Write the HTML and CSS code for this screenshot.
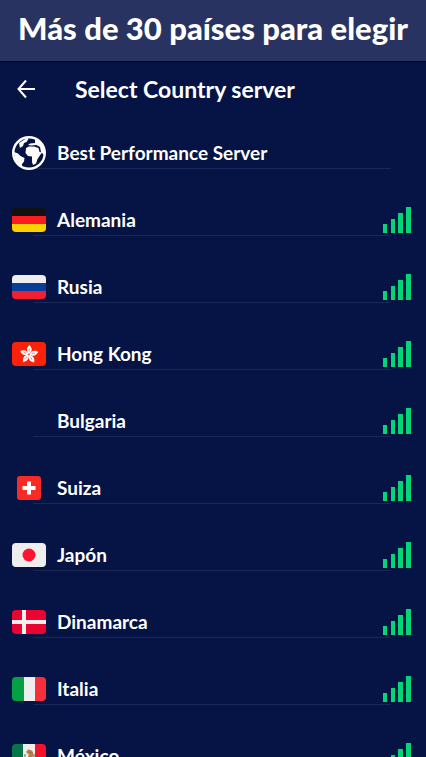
FILE: index.html
```html
<!DOCTYPE html>
<html lang="es">
<head>
<meta charset="utf-8">
<meta name="viewport" content="width=device-width, initial-scale=1">
<title>Select Country server</title>
<link rel="stylesheet" href="styles.css">
</head>
<body>
<header class="banner"><h1>Más de 30 países para elegir</h1></header>
<main class="screen">
  <div class="toolbar">
    <button class="back" type="button" aria-label="Back">
      <svg width="20" height="20" viewBox="0 0 20 20" fill="none" stroke="#fff" stroke-width="2"><path d="M19 10H3M10 1.500L2.500 10l7.500 8.500"/></svg>
    </button>
    <h2>Select Country server</h2>
  </div>
  <ul class="servers" id="servers">
    <li><button class="server" type="button">
      <svg class="globe" viewBox="0 0 34 34"><circle cx="17" cy="17" r="17" fill="#fff"/><circle cx="17" cy="17" r="14.600" fill="#051444"/><path fill="#fff" d="M2 16l4 1.500 2.500 2.500 4 2-.5 3.500-2 2.500v3L3 26zM14 12l3-1.500h5l4.500 1.500 1 4 2.500.5-2.500 3.500-2 3-1.500 4.500-3 1.500-1-3v-5.500l-4-.5-2.500-3zM23 2l6 4 4 9-1 4-3-3-1-5-3.500-2L19 9.500l-3-.5 2-1.500 5-.5zM7 7l8-5 1.500 1-2 3-2.500 1-1 3-3 2z"/></svg>
      <span class="name">Best Performance Server</span></button></li>
    <li><button class="server" type="button">
      <svg class="flag" viewBox="0 0 34 24"><path fill="#111" d="M0 0h34v8H0z"/><path fill="#fa1c20" d="M0 8h34v8H0z"/><path fill="#ffd000" d="M0 16h34v8H0z"/></svg>
      <span class="name">Alemania</span><svg class="signal" viewBox="0 0 28 26"><path d="M0 17h4v9H0zM8 12h4v14H8zM15 6h5v20h-5zM23 0h5v26h-5z"/></svg></button></li>
    <li><button class="server" type="button">
      <svg class="flag" viewBox="0 0 34 24"><path fill="#eee" d="M0 0h34v8H0z"/><path fill="#073e99" d="M0 8h34v8H0z"/><path fill="#f21f30" d="M0 16h34v8H0z"/></svg>
      <span class="name">Rusia</span><svg class="signal" viewBox="0 0 28 26"><path d="M0 17h4v9H0zM8 12h4v14H8zM15 6h5v20h-5zM23 0h5v26h-5z"/></svg></button></li>
    <li><button class="server" type="button">
      <svg class="flag" viewBox="0 0 34 24"><defs><g id="petal"><path fill="#fff" d="M0-.5C-3-2-4-7-.5-9.500 0-8 2.500-7 2-4 1.500-2 .8-1.500 0-.5z"/><path d="M0-3Q-1-4 0-6" fill="none" stroke="#fa2a10" stroke-width=".5"/></g></defs><path fill="#fa2208" d="M0 0h34v24H0z"/><g transform="translate(17 12.500) rotate(8)"><use href="#petal"/><use href="#petal" transform="rotate(72)"/><use href="#petal" transform="rotate(144)"/><use href="#petal" transform="rotate(216)"/><use href="#petal" transform="rotate(288)"/></g></svg>
      <span class="name">Hong Kong</span><svg class="signal" viewBox="0 0 28 26"><path d="M0 17h4v9H0zM8 12h4v14H8zM15 6h5v20h-5zM23 0h5v26h-5z"/></svg></button></li>
    <li><button class="server" type="button">
      <span class="flag"></span>
      <span class="name">Bulgaria</span><svg class="signal" viewBox="0 0 28 26"><path d="M0 17h4v9H0zM8 12h4v14H8zM15 6h5v20h-5zM23 0h5v26h-5z"/></svg></button></li>
    <li><button class="server" type="button">
      <svg class="flag" viewBox="0 0 34 24"><rect x="5" width="24" height="24" rx="3" fill="#f92a25"/><path fill="#fff" d="M15 5.500h4V10h4.500v4H19v4.500h-4V14h-4.500v-4H15z"/></svg>
      <span class="name">Suiza</span><svg class="signal" viewBox="0 0 28 26"><path d="M0 17h4v9H0zM8 12h4v14H8zM15 6h5v20h-5zM23 0h5v26h-5z"/></svg></button></li>
    <li><button class="server" type="button">
      <svg class="flag" viewBox="0 0 34 24"><path fill="#eee" d="M0 0h34v24H0z"/><circle cx="17" cy="12" r="6.500" fill="#ff1230"/></svg>
      <span class="name">Japón</span><svg class="signal" viewBox="0 0 28 26"><path d="M0 17h4v9H0zM8 12h4v14H8zM15 6h5v20h-5zM23 0h5v26h-5z"/></svg></button></li>
    <li><button class="server" type="button">
      <svg class="flag" viewBox="0 0 34 24"><path fill="#e90532" d="M0 0h34v24H0z"/><path fill="#f2eef0" d="M10 0h4v24h-4zM0 10h34v4H0z"/></svg>
      <span class="name">Dinamarca</span><svg class="signal" viewBox="0 0 28 26"><path d="M0 17h4v9H0zM8 12h4v14H8zM15 6h5v20h-5zM23 0h5v26h-5z"/></svg></button></li>
    <li><button class="server" type="button">
      <svg class="flag" viewBox="0 0 34 24"><path fill="#05a044" d="M0 0h12v24H0z"/><path fill="#eee" d="M12 0h11v24H12z"/><path fill="#f72f3b" d="M23 0h11v24H23z"/></svg>
      <span class="name">Italia</span><svg class="signal" viewBox="0 0 28 26"><path d="M0 17h4v9H0zM8 12h4v14H8zM15 6h5v20h-5zM23 0h5v26h-5z"/></svg></button></li>
    <li><button class="server" type="button">
      <svg class="flag" viewBox="0 0 34 24"><path fill="#087449" d="M0 0h11v24H0z"/><path fill="#eee" d="M11 0h12v24H11z"/><path fill="#f5122c" d="M23 0h11v24H23z"/><path fill="#c9774f" d="M14 8l2-2.500 3 .5 2 2 .5 4-3 2-3-1 1.500-2z"/><path fill="none" stroke="#668c58" stroke-width="1.200" d="M13 10q-.5 7 4.500 7 5-1 4.500-7M17 8l3 1"/></svg>
      <span class="name">México</span><svg class="signal" viewBox="0 0 28 26"><path d="M0 17h4v9H0zM8 12h4v14H8zM15 6h5v20h-5zM23 0h5v26h-5z"/></svg></button></li>
  </ul>
</main>
</body>
</html>
```
FILE: styles.css
```css
* { box-sizing: border-box; }
body {
  margin: 0;
  height: 100vh;
  display: flex;
  flex-direction: column;
  overflow: hidden;
  background: #051444;
  color: #fff;
  font-family: Lato, "Open Sans", sans-serif;
}
h1, h2, ul { margin: 0; padding: 0; }
.banner {
  flex: none;
  padding: 8px 0 13px;
  background: #283361;
  border-bottom: 1px solid #000514;
  text-align: center;
}
h1 {
  font-size: 31px;
  line-height: 40px;
  font-weight: 900;
  white-space: nowrap;
}
.screen {
  flex: 1;
  min-height: 0;
  display: flex;
  flex-direction: column;
}
.toolbar {
  flex: none;
  display: flex;
  align-items: center;
  gap: 39px;
  height: 57px;
  padding: 0 16px 3px;
}
.back {
  display: flex;
  padding: 0;
  border: 0;
  background: none;
}
h2 {
  font-size: 23px;
  line-height: 28px;
  font-weight: 700;
}
.servers {
  flex: 1;
  min-height: 0;
  overflow: hidden;
  list-style: none;
}
.server {
  position: relative;
  display: flex;
  align-items: center;
  width: 100%;
  height: 67px;
  padding: 0 15px 0 12px;
  border: 0;
  background: none;
  color: inherit;
  font: 700 19px/24px Lato, sans-serif;
  text-align: left;
}
.server::before {
  content: "";
  position: absolute;
  left: 33px;
  right: 35px;
  bottom: 17px;
  height: 1px;
  background: #1c2853;
}
.flag, .globe {
  position: relative;
  flex: none;
  width: 34px;
  height: 24px;
  border-radius: 4px;
}
.globe { height: 34px; }
.name {
  flex: 1;
  margin-left: 11px;
}
.signal {
  flex: none;
  width: 28px;
  height: 26px;
  fill: #05d477;
}
```
